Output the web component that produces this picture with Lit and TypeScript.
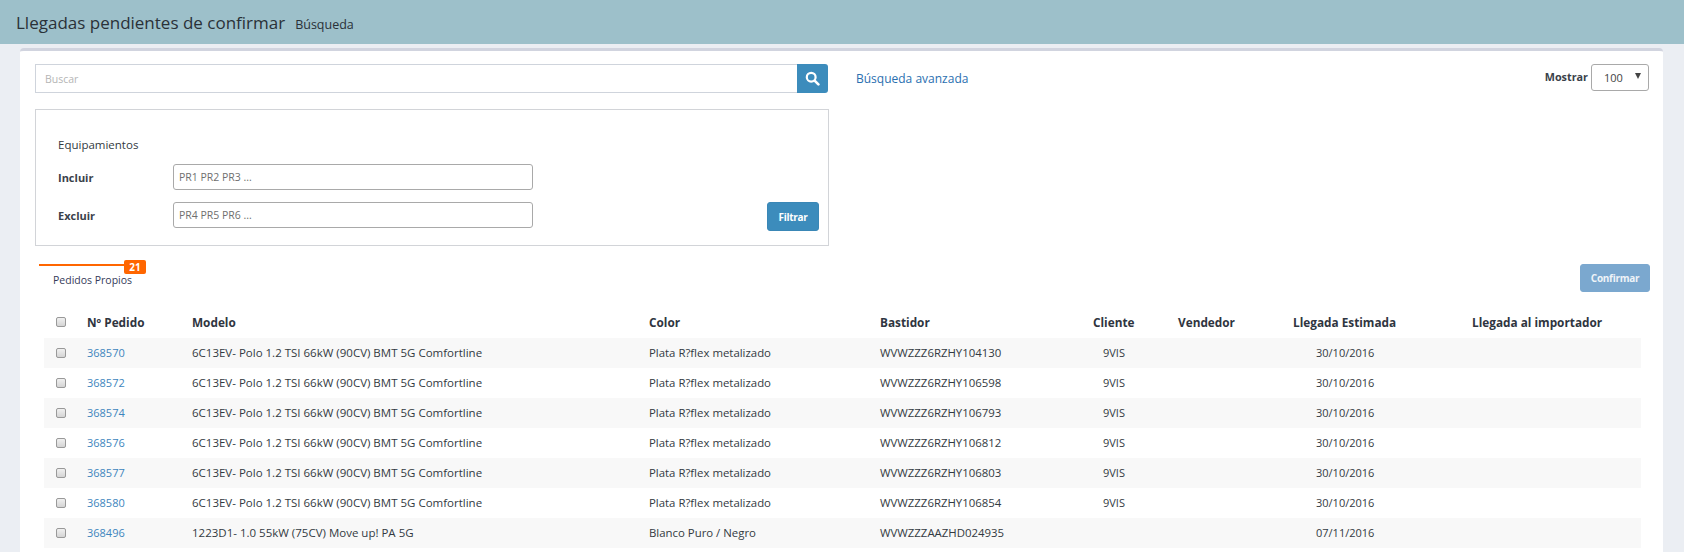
import { LitElement, html, css } from "lit";
import { customElement } from "lit/decorators.js";

const POLO = "6C13EV- Polo 1.2 TSI 66kW (90CV) BMT 5G Comfortline";
const rows = [
  ["368570", POLO, "Plata R?flex metalizado", "WVWZZZ6RZHY104130", "9VIS", "30/10/2016"],
  ["368572", POLO, "Plata R?flex metalizado", "WVWZZZ6RZHY106598", "9VIS", "30/10/2016"],
  ["368574", POLO, "Plata R?flex metalizado", "WVWZZZ6RZHY106793", "9VIS", "30/10/2016"],
  ["368576", POLO, "Plata R?flex metalizado", "WVWZZZ6RZHY106812", "9VIS", "30/10/2016"],
  ["368577", POLO, "Plata R?flex metalizado", "WVWZZZ6RZHY106803", "9VIS", "30/10/2016"],
  ["368580", POLO, "Plata R?flex metalizado", "WVWZZZ6RZHY106854", "9VIS", "30/10/2016"],
  ["368496", "1223D1- 1.0 55kW (75CV) Move up! PA 5G", "Blanco Puro / Negro", "WVWZZZAAZHD024935", "", "07/11/2016"],
];

@customElement("app-root")
export class AppRoot extends LitElement {
  static styles = css`
    :host { display: block; height: 552px; overflow: hidden; background: #ebeef3; font-family: "Open Sans", sans-serif; font-size: 12px; color: #333a42; }
    * { box-sizing: border-box; }
    .hdr { height: 44px; background: #9dc0ca; display: flex; align-items: baseline; gap: 10px; padding: 10px 16px 0; color: #2a3138; }
    .hdr h1 { margin: 0; font-size: 17px; font-weight: 400; line-height: 26px; }
    .hdr span { font-size: 12.5px; }
    .card { margin: 4px 21px 0 20px; background: #fff; border-top: 3px solid #d1d4df; border-radius: 4px 4px 0 0; padding: 13px 13px 0 15px; height: 504px; }
    .top { display: grid; grid-template-columns: 794px 1fr auto; column-gap: 27px; height: 45px; }
    .search { display: flex; height: 29px; width: 793px; }
    .search input { flex: 1; min-width: 0; border: 1px solid #cfd4dc; border-right: 0; padding: 0 9px; font: inherit; font-size: 10.5px; outline: 0; }
    .search input::placeholder { color: #b5b5b5; opacity: 1; }
    .sbtn { width: 31px; background: #3c8cbc; border: 0; border-radius: 0 3px 3px 0; display: flex; align-items: center; justify-content: center; padding: 0; }
    .adv { color: #2a6fb0; line-height: 29px; font-size: 12px; text-decoration: none; }
    .show { display: flex; align-items: flex-start; gap: 3px; font-weight: 700; margin-right: 1px; line-height: 26px; font-size: 10.8px; color: #3a414a; }
    .sel { width: 58px; height: 27px; border: 1px solid #a9a9a9; border-radius: 3px; display: flex; justify-content: space-between; padding: 0 7px 0 12px; font-weight: 400; font-size: 11px; line-height: 25px; color: #444; }
    .arrow { width: 0; height: 0; margin-top: 8px; border-left: 3.5px solid transparent; border-right: 3.5px solid transparent; border-top: 6px solid #444; }
    .filter { width: 794px; height: 137px; border: 1px solid #d2d4d8; padding: 26px 8px 0 22px; position: relative; }
    .filter .ttl { line-height: 17px; height: 16px; font-size: 11.5px; color: #333a42; }
    .frow { display: grid; grid-template-columns: 115px 360px; align-items: center; height: 26px; margin-top: 12px; }
    .frow label { font-weight: 700; font-size: 11px; color: #3a414a; }
    .frow input { height: 26px; width: 360px; border: 1px solid #a9a9a9; border-radius: 3px; padding: 0 5px; font: inherit; font-size: 10.5px; outline: 0; }
    .frow input::placeholder { color: #6f6f6f; opacity: 1; }
    .fbtn { position: absolute; right: 9px; bottom: 14px; width: 52px; height: 29px; }
    .btn { background: #3c8cbc; color: #fff; border: 1px solid #3a87b6; border-radius: 3px; font: inherit; font-size: 10px; font-weight: 700; letter-spacing: -.3px; padding: 0; }
    .tabs { display: flex; justify-content: space-between; align-items: flex-start; padding: 14px 0 0 4px; height: 60.5px; }
    .tab { position: relative; width: 113px; padding: 3px 0 0 14px; line-height: 20px; height: 30px; }
    .tab::before { content: ""; position: absolute; left: 0; right: 22px; top: 4px; height: 2px; background: #ff6600; }
    .tab .lbl { display: block; margin-top: 7px; font-size: 10.5px; color: #353a5a; }
    .badge { position: absolute; left: 85px; top: 0; width: 22px; height: 14px; background: #ff6600; color: #fff; border-radius: 2px; font-size: 10px; font-weight: 700; line-height: 14px; text-align: center; }
    .conf { width: 70px; height: 28px; margin-top: 4px; background: #7ba8cf; border-color: #7ba8cf; color: #eef3f8; }
    .tbl { margin-left: 9px; width: 1597px; border-collapse: collapse; table-layout: fixed; }
    .tbl th, .tbl td { padding: 0; text-align: left; white-space: nowrap; vertical-align: middle; }
    .tbl th { font-size: 11.8px; font-weight: 700; height: 31px; color: #2f3540; }
    .tbl td { height: 30px; font-size: 11.4px; color: #333a42; }
    .tbl td.model { font-size: 11.5px; }
    .tbl tbody tr:nth-child(odd) { background: #f8f8f8; }
    .tbl .ck { padding-left: 12px; }
    .tbl .vis { padding-left: 10px; font-size: 11px; }
    .tbl .date { padding-left: 23px; font-size: 11px; }
    .tbl a { color: #3d85bd; text-decoration: none; font-size: 11px; }
    .box { appearance: none; display: block; margin: 0; width: 10px; height: 10px; border: 1px solid #999; border-radius: 2px; background: linear-gradient(#f0f0f0, #d4d4d4); }
  `;

  render() {
    return html`
      <header class="hdr"><h1>Llegadas pendientes de confirmar</h1><span>Búsqueda</span></header>
      <main class="card">
        <div class="top">
          <div class="search">
            <input placeholder="Buscar" />
            <button class="sbtn" aria-label="Buscar">
              <svg width="15" height="15" viewBox="0 0 15 15"><circle cx="6.2" cy="6.2" r="4.4" fill="none" stroke="#fff" stroke-width="2.2"/><path d="M9.6 9.6 13.4 13.4" stroke="#fff" stroke-width="2.6" stroke-linecap="round"/></svg>
            </button>
          </div>
          <a class="adv" href="#">Búsqueda avanzada</a>
          <div class="show">Mostrar <span class="sel">100<i class="arrow"></i></span></div>
        </div>
        <section class="filter">
          <div class="ttl">Equipamientos</div>
          <div class="frow"><label>Incluir</label><input placeholder="PR1 PR2 PR3 ..." /></div>
          <div class="frow"><label>Excluir</label><input placeholder="PR4 PR5 PR6 ..." /></div>
          <button class="btn fbtn">Filtrar</button>
        </section>
        <div class="tabs">
          <div class="tab"><span class="lbl">Pedidos Propios</span><span class="badge">21</span></div>
          <button class="btn conf">Confirmar</button>
        </div>
        <table class="tbl">
          <colgroup>
            <col style="width:43px" /><col style="width:105px" /><col style="width:457px" /><col style="width:231px" /><col style="width:213px" /><col style="width:85px" /><col style="width:115px" /><col style="width:179px" /><col style="width:169px" />
          </colgroup>
          <thead>
            <tr>
              <th class="ck"><input type="checkbox" class="box" /></th>
              <th>Nº Pedido</th><th>Modelo</th><th>Color</th><th>Bastidor</th><th>Cliente</th><th>Vendedor</th><th>Llegada Estimada</th><th>Llegada al importador</th>
            </tr>
          </thead>
          <tbody>
            ${rows.map(r => html`
              <tr>
                <td class="ck"><input type="checkbox" class="box" /></td>
                <td><a href="#">${r[0]}</a></td>
                <td class="model">${r[1]}</td><td>${r[2]}</td><td>${r[3]}</td>
                <td class="vis">${r[4]}</td>
                <td></td>
                <td class="date">${r[5]}</td>
                <td></td>
              </tr>`)}
          </tbody>
        </table>
      </main>
    `;
  }
}
